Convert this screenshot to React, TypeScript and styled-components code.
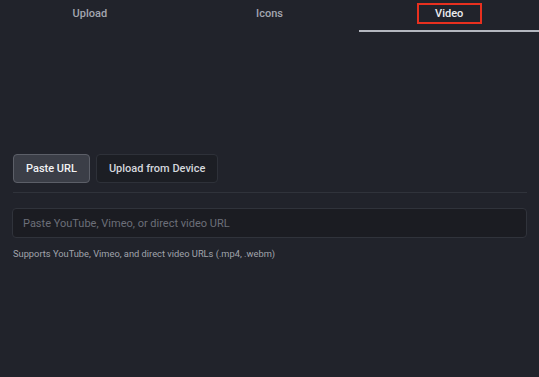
import React, { useState } from "react";
import styled, { createGlobalStyle } from "styled-components";

const Global = createGlobalStyle`
  html, body { margin: 0; padding: 0; background: #21232b; }
  body { font-family: Roboto, "Noto Sans", sans-serif; }
  * { box-sizing: border-box; }
`;

const Page = styled.div`
  width: 539px;
  height: 377px;
  background: #21232b;
  overflow: hidden;
`;

const TabBar = styled.div`
  display: grid;
  grid-template-columns: 1fr 1fr 1fr;
  height: 32px;
`;

const Tab = styled.div<{ $active?: boolean }>`
  display: flex;
  justify-content: center;
  align-items: flex-start;
  padding-top: 3px;
  font-size: 11px;
  font-weight: 500;
  color: ${(p) => (p.$active ? "#ececef" : "#a3a6b0")};
  border-bottom: 2px solid ${(p) => (p.$active ? "#b4b7bf" : "transparent")};
`;

const TabLabel = styled.span<{ $marked?: boolean }>`
  display: inline-flex;
  align-items: center;
  justify-content: center;
  height: 21px;
  width: ${(p) => (p.$marked ? "65px" : "auto")};
  border: 2px solid ${(p) => (p.$marked ? "#e8301f" : "transparent")};
`;

const Content = styled.div`
  padding: 122px 12px 0 12px;
`;

const ButtonRow = styled.div`
  display: flex;
  gap: 6px;
  padding-left: 1px;
`;

const ModeButton = styled.button<{ $active?: boolean }>`
  height: 29px;
  padding: 0 12px;
  border-radius: 4px;
  font-family: Roboto, "Noto Sans", sans-serif;
  font-size: 11px;
  font-weight: 500;
  color: ${(p) => (p.$active ? "#f2f2f4" : "#d4d6dc")};
  background: ${(p) => (p.$active ? "#3b3e47" : "#1c1e24")};
  border: 1px solid ${(p) => (p.$active ? "#5c5f68" : "#2e3139")};
  cursor: pointer;
`;

const Divider = styled.div`
  height: 1px;
  background: #30333b;
  margin: 9px 0 0 1px;
`;

const UrlInput = styled.input`
  display: block;
  width: 100%;
  height: 30px;
  margin-top: 15px;
  padding: 0 10px;
  border-radius: 4px;
  border: 1px solid #30333b;
  background: #1b1c22;
  color: #e0e0e4;
  font-family: Roboto, "Noto Sans", sans-serif;
  font-size: 11px;
  outline: none;
  &::placeholder { color: #6c6f79; }
`;

const Help = styled.p`
  margin: 10px 0 0 1px;
  font-size: 9.3px;
  color: #a0a3ab;
`;

export default function App() {
  const [mode, setMode] = useState<"url" | "device">("url");
  return (
    <Page>
      <Global />
      <TabBar>
        <Tab><TabLabel>Upload</TabLabel></Tab>
        <Tab><TabLabel>Icons</TabLabel></Tab>
        <Tab $active><TabLabel $marked>Video</TabLabel></Tab>
      </TabBar>
      <Content>
        <ButtonRow>
          <ModeButton $active={mode === "url"} onClick={() => setMode("url")}>Paste URL</ModeButton>
          <ModeButton $active={mode === "device"} onClick={() => setMode("device")}>Upload from Device</ModeButton>
        </ButtonRow>
        <Divider />
        <UrlInput placeholder="Paste YouTube, Vimeo, or direct video URL" />
        <Help>Supports YouTube, Vimeo, and direct video URLs (.mp4, .webm)</Help>
      </Content>
    </Page>
  );
}
